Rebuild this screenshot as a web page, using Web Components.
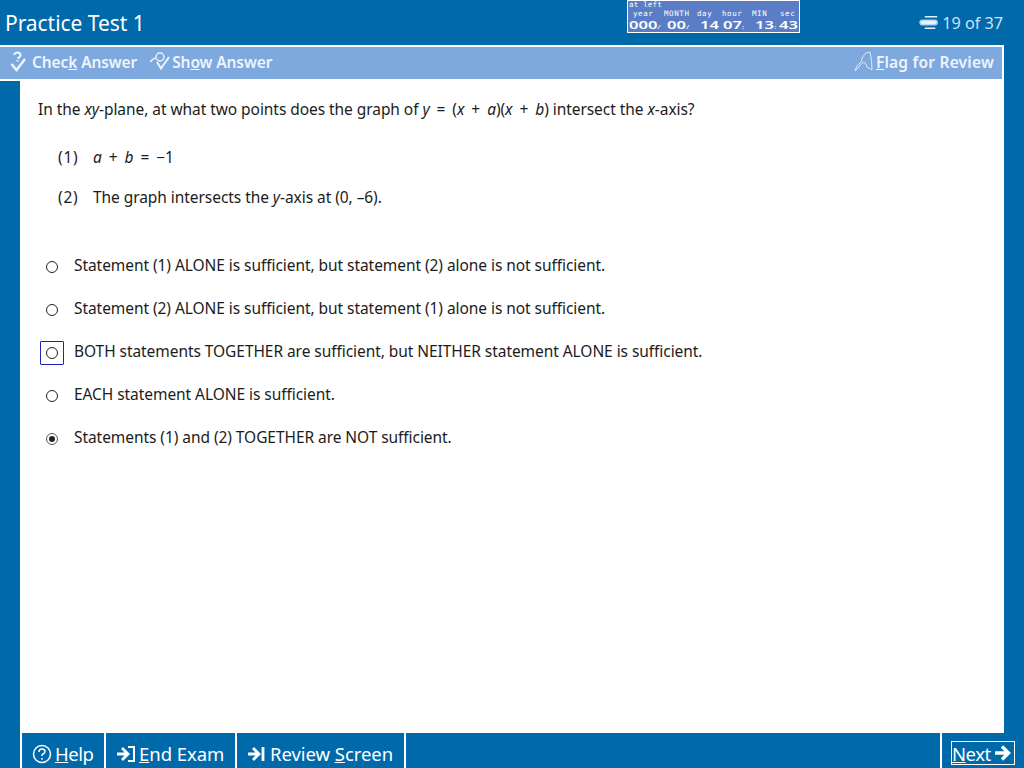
<!DOCTYPE html>
<html lang="en">
<head>
<meta charset="utf-8">
<title>Practice Test 1</title>
<style>
  html, body { margin: 0; height: 100%; background: #0069aa; }
  body { font-family: "Noto Sans", "Open Sans", sans-serif; overflow: hidden; }
  i { font-family: "Noto Sans", sans-serif; }
  .m { word-spacing: 3px; }
  .page { display: flex; flex-direction: column; height: calc(100vh - 81px); }
  .middle { flex: 1; display: flex; margin: 0 20px; min-height: 0; }
</style>
</head>
<body>
<template id="exam-header-tpl">
  <style>
    :host { display: flex; height: 45px; align-items: center; background: #0069aa; color: #fff; padding: 0 21px 0 5px; box-sizing: border-box; }
    .title { font-size: 21px; flex: 1; letter-spacing: -0.05px; }
    .timer { width: 173px; margin-right: 119px; margin-top: -12px; }
    .count { display: flex; align-items: center; gap: 4px; font-size: 16.200px; color: #cfe0f2; width: 84px; justify-content: flex-end; white-space: nowrap; }
  </style>
  <div class="title"><slot name="title"></slot></div>
  <div class="timer"><slot name="timer"></slot></div>
  <div class="count">
    <svg width="20" height="15" viewBox="0 0 20 15" fill="none">
      <path d="M6 1.500h13M6 13.500h11" stroke="#e4f0fb" stroke-width="1.600"/>
      <rect x="1" y="5" width="18" height="5" rx="2.500" stroke="#a9d0f0" stroke-width="1.400" fill="#e8f2fb"/>
    </svg>
    <slot name="count"></slot>
  </div>
</template>

<template id="exam-timer-tpl">
  <style>
    :host { display: block; height: 33px; box-sizing: border-box; border: 1px solid #fff; background: #5b7dc5; color: #fff; font-family: "DejaVu Sans Mono", monospace; overflow: hidden; }
    .left { font-size: 7.500px; line-height: 8px; padding-left: 1px; letter-spacing: .2px; }
    .labels { display: grid; grid-template-columns: 31px 33px 25px 30px 28px 1fr; padding-left: 5px; font-size: 7.500px; line-height: 9px; letter-spacing: .6px; }
    .digits { display: grid; grid-template-columns: 38px 33px 23px 32px 24px 1fr; padding-left: 1px; margin-top: 1px; font-family: "Noto Sans", sans-serif; font-size: 11px; font-weight: 600; line-height: 12px; white-space: nowrap; }
    .digits span { display: block; transform: scaleX(1.5); transform-origin: left center; width: 10px; }
    small { font-size: 6px; font-weight: normal; }
  </style>
  <div class="left">at left</div>
  <div class="labels"><span>year</span><span>MONTH</span><span>day</span><span>hour</span><span>MIN</span><span>sec</span></div>
  <div class="digits"><span>000<small>/</small></span><span>00<small>/</small></span><span>14</span><span>07<small>:</small></span><span>13<small>:</small></span><span>43</span></div>
</template>

<template id="exam-toolbar-tpl">
  <style>
    :host { display: flex; height: 36px; box-sizing: border-box; width: 1004px; border: 2px solid #fff; border-left: 0; background: #7ea9df; align-items: center; padding: 0 8px 3px 10px; gap: 12px; }
    .spacer { flex: 1; }
  </style>
  <slot name="start"></slot>
  <div class="spacer"></div>
  <slot name="end"></slot>
</template>

<template id="tool-button-tpl">
  <style>
    :host { display: inline-flex; align-items: center; gap: 2px; color: #eef4fc; font-size: 15.500px; font-weight: 600; letter-spacing: -0.1px; }
    :host([wide]) { letter-spacing: .22px; }
    ::slotted(svg) { display: block; }
  </style>
  <slot name="icon"></slot>
  <span><slot></slot></span>
</template>

<template id="exam-question-tpl">
  <style>
    :host { display: block; flex: 1; background: #fff; color: #1c1c1c; font-size: 15.500px; padding: 17px 0 0 18px; letter-spacing: -0.06px; }
    .stem { line-height: 22px; margin-bottom: 26px; }
    .statements { display: flex; flex-direction: column; gap: 18px; padding-left: 20px; margin-bottom: 46px; }
    .choices { display: flex; flex-direction: column; gap: 21px; margin-left: 2px; }
  </style>
  <div class="stem"><slot name="stem"></slot></div>
  <div class="statements"><slot name="statement"></slot></div>
  <div class="choices"><slot name="choice"></slot></div>
</template>

<template id="exam-statement-tpl">
  <style>
    :host { display: flex; line-height: 22px; }
    .num { width: 35px; letter-spacing: .8px; }
  </style>
  <span class="num"><slot name="num"></slot></span>
  <span><slot></slot></span>
</template>

<template id="answer-choice-tpl">
  <style>
    :host { display: flex; align-items: center; height: 22px; }
    .box { width: 24px; height: 24px; box-sizing: border-box; margin-right: 10px; display: flex; align-items: center; justify-content: center; border: 1px solid transparent; position: relative; top: 2px; }
    :host([focused]) .box { border-color: #2222bb; border-radius: 1px; }
    .radio { width: 12px; height: 12px; margin-left: -1px; box-sizing: border-box; border: 1.800px solid #222; border-radius: 50%; display: flex; align-items: center; justify-content: center; background: #fff; }
    .dot { width: 6px; height: 6px; border-radius: 50%; background: #222; display: none; }
    :host([selected]) .radio { border-color: #555; }
    :host([selected]) .dot { display: block; }
  </style>
  <span class="box"><span class="radio"><span class="dot"></span></span></span>
  <span><slot></slot></span>
</template>

<template id="exam-footer-tpl">
  <style>
    :host { display: flex; height: 35px; margin-left: 20px; border-left: 2px solid #fff; background: #0069aa; justify-content: space-between; }
    .group { display: flex; }
  </style>
  <div class="group"><slot name="start"></slot></div>
  <div class="group"><slot name="end"></slot></div>
</template>

<template id="footer-button-tpl">
  <style>
    :host { display: flex; align-items: center; box-sizing: border-box; height: 35px; color: #fff; font-size: 18.500px; letter-spacing: -0.05px; border-right: 2px solid #fff; padding: 6px 0 0 10px; }
    :host([slot="end"]) { border-right: 0; border-left: 2px solid #fff; width: 84px; padding: 5px 0 0 9px; letter-spacing: -0.5px; }
    .wrap { display: flex; align-items: center; gap: 3px; height: 24px; }
    :host([framed]) .wrap { box-sizing: border-box; width: 64px; border: 1px solid #fff; }
  </style>
  <span class="wrap"><slot name="icon"></slot><span><slot></slot></span><slot name="after"></slot></span>
</template>

<exam-header>
  <span slot="title">Practice Test 1</span>
  <exam-timer slot="timer"></exam-timer>
  <span slot="count">19 of 37</span>
</exam-header>

<exam-toolbar>
  <tool-button slot="start">
    <svg slot="icon" width="20" height="22" viewBox="0 0 20 22" fill="none" stroke="#eef4fc" stroke-width="2">
      <path d="M4 4q1-2.500 3.500-2.500Q10.500 1.500 10.500 4q0 2-3 3.500"/><path d="M7.500 9v1.500"/><path d="M1.500 13l5 6L15 8" stroke-width="2.400"/>
    </svg>
    Chec<u>k</u> Answer
  </tool-button>
  <tool-button slot="start">
    <svg slot="icon" width="21" height="22" viewBox="0 0 21 22" fill="none" stroke="#eef4fc" stroke-width="1.400">
      <circle cx="11" cy="6" r="4"/><path d="M1.500 11q1-2.500 5-4"/><path d="M8 11l4 6.500L20 6" stroke-width="2"/>
    </svg>
    Sh<u>o</u>w Answer
  </tool-button>
  <tool-button slot="end" wide>
    <svg slot="icon" width="20" height="22" viewBox="0 0 20 22" fill="none" stroke="#dce8f6" stroke-width="1">
      <path d="M1 20q1-6 6-9q1-6 5-9l4-1q2 8 2 18l-5-3q-1-4-3-5q-3 1-5 5z"/>
    </svg>
    <u>F</u>lag for Review
  </tool-button>
</exam-toolbar>

<div class="page">
  <div class="middle">
    <exam-question>
      <span slot="stem">In the <i>xy</i>-plane, at what two points does the graph of <span class="m"><i>y</i> = (<i>x</i> + <i>a</i>)(<i>x</i> + <i>b</i>)</span> intersect the <i>x</i>-axis?</span>
      <exam-statement slot="statement"><span slot="num">(1)</span><span class="m"><i>a</i> + <i>b</i> = −1</span></exam-statement>
      <exam-statement slot="statement"><span slot="num">(2)</span>The graph intersects the <i>y</i>-axis at (0, –6).</exam-statement>
      <answer-choice slot="choice">Statement (1) ALONE is sufficient, but statement (2) alone is not sufficient.</answer-choice>
      <answer-choice slot="choice">Statement (2) ALONE is sufficient, but statement (1) alone is not sufficient.</answer-choice>
      <answer-choice slot="choice" focused>BOTH statements TOGETHER are sufficient, but NEITHER statement ALONE is sufficient.</answer-choice>
      <answer-choice slot="choice">EACH statement ALONE is sufficient.</answer-choice>
      <answer-choice slot="choice" selected>Statements (1) and (2) TOGETHER are NOT sufficient.</answer-choice>
    </exam-question>
  </div>
  <exam-footer>
    <footer-button slot="start" style="width:84px;letter-spacing:-0.45px">
      <svg slot="icon" width="20" height="20" viewBox="0 0 20 20" fill="none" stroke="#fff" stroke-width="1.500">
        <circle cx="10" cy="10" r="8.500"/><path d="M7 8q0-3 3-3t3 2.500q0 1.500-2 2.500q-1 .6-1 2"/><path d="M10 14v1.800"/>
      </svg>
      <u>H</u>elp
    </footer-button>
    <footer-button slot="start" style="width:131px">
      <svg slot="icon" width="20" height="18" viewBox="0 0 20 18" fill="none" stroke="#fff">
        <path d="M1 9h10M6 3l6 6-6 6" stroke-width="2.800"/><path d="M12 2h6v14h-6" stroke-width="2"/>
      </svg>
      <u>E</u>nd Exam
    </footer-button>
    <footer-button slot="start" style="width:169px">
      <svg slot="icon" width="20" height="16" viewBox="0 0 20 16" fill="none" stroke="#fff">
        <path d="M1 8h10M6 2l6 6-6 6" stroke-width="2.800"/><path d="M16 1v14" stroke-width="2.800"/>
      </svg>
      Review <u>S</u>creen
    </footer-button>
    <footer-button slot="end" framed>
      <u>N</u>ext
      <svg slot="after" width="17" height="18" viewBox="0 0 17 18" fill="none" stroke="#fff" stroke-width="3.400">
        <path d="M1 9h13M8 2.500l6.500 6.500L8 15.500"/>
      </svg>
    </footer-button>
  </exam-footer>
</div>

<script>
  function define(name, tplId) {
    customElements.define(name, class extends HTMLElement {
      constructor() {
        super();
        this.attachShadow({ mode: 'open' });
        this.shadowRoot.appendChild(document.getElementById(tplId).content.cloneNode(true));
      }
    });
  }
  define('exam-header', 'exam-header-tpl');
  define('exam-timer', 'exam-timer-tpl');
  define('exam-toolbar', 'exam-toolbar-tpl');
  define('tool-button', 'tool-button-tpl');
  define('exam-question', 'exam-question-tpl');
  define('exam-statement', 'exam-statement-tpl');
  define('answer-choice', 'answer-choice-tpl');
  define('exam-footer', 'exam-footer-tpl');
  define('footer-button', 'footer-button-tpl');
</script>
</body>
</html>
